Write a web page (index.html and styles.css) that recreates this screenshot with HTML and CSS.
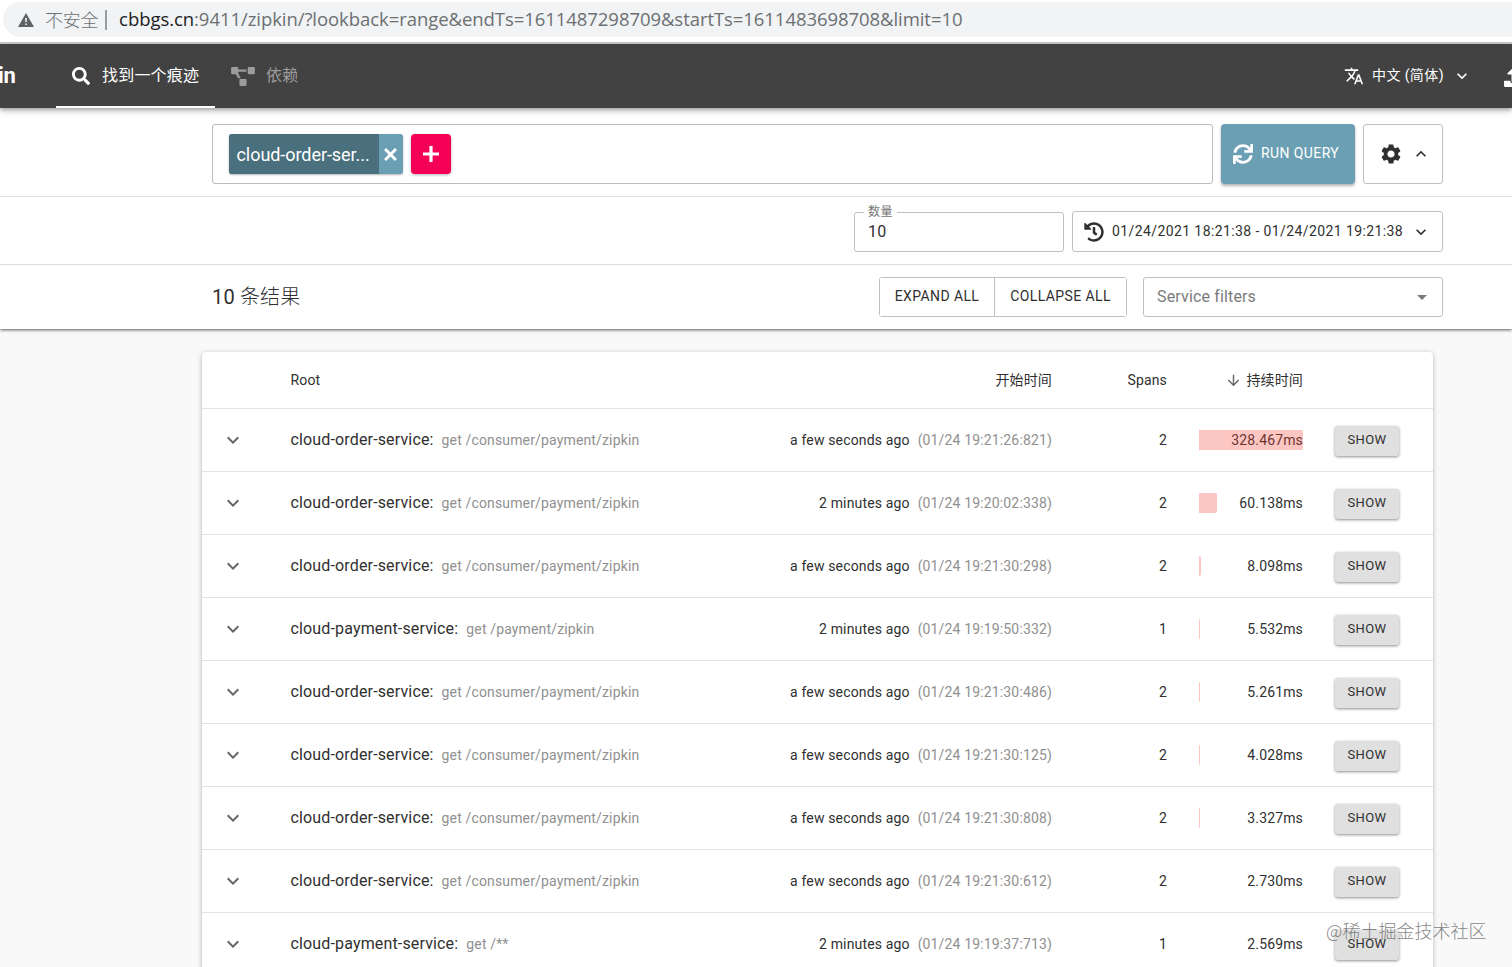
FILE: index.html
```html
<!DOCTYPE html>
<html lang="zh-CN">
<head>
<meta charset="utf-8">
<title>Zipkin</title>
<link rel="stylesheet" href="styles.css">
</head>
<body>
<svg class="defs" width="0" height="0">
  <symbol id="down" viewBox="0 0 24 24"><path d="M16.59 8.59L12 13.17 7.41 8.59 6 10l6 6 6-6z"/></symbol>
</svg>

<div class="address">
  <div class="pill">
    <svg class="warn" viewBox="0 0 16 14"><path d="M8 0L16 14H0z"/><path class="mark" d="M7.2 5h1.6v4H7.2zM7.2 10.4h1.6V12H7.2z"/></svg>
    <span class="insecure">不安全</span>
    <span class="sep"></span>
    <span class="url"><b>cbbgs.cn</b>:9411/zipkin/?lookback=range&amp;endTs=1611487298709&amp;startTs=1611483698708&amp;limit=10</span>
  </div>
</div>

<header class="appbar">
  <div class="brand">in</div>
  <nav class="tabs">
    <a class="tab active"><svg class="i-search" viewBox="0 0 512 512"><path d="M505 442.7L405.3 343c-4.5-4.5-10.6-7-17-7H372c27.6-35.3 44-79.7 44-128C416 93.1 322.9 0 208 0S0 93.1 0 208s93.1 208 208 208c48.3 0 92.7-16.4 128-44v16.3c0 6.4 2.5 12.5 7 17l99.7 99.7c9.4 9.4 24.6 9.4 33.9 0l28.3-28.3c9.4-9.4 9.4-24.6.1-34zM208 336c-70.7 0-128-57.2-128-128 0-70.7 57.2-128 128-128 70.7 0 128 57.2 128 128 0 70.7-57.2 128-128 128z"/></svg><span>找到一个痕迹</span></a>
    <a class="tab"><svg class="i-diagram" viewBox="0 0 640 512"><path d="M384 320H256c-17.67 0-32 14.33-32 32v128c0 17.67 14.33 32 32 32h128c17.67 0 32-14.33 32-32V352c0-17.67-14.33-32-32-32zM192 32c0-17.67-14.33-32-32-32H32C14.33 0 0 14.33 0 32v128c0 17.67 14.33 32 32 32h95.72l73.16 128.04C211.98 300.98 232.4 288 256 288h.28L192 175.51V128h224V64H192V32zM608 0H480c-17.67 0-32 14.33-32 32v128c0 17.67 14.33 32 32 32h128c17.67 0 32-14.33 32-32V32c0-17.67-14.33-32-32-32z"/></svg><span>依赖</span></a>
  </nav>
  <div class="lang">
    <svg class="i-translate" viewBox="0 0 24 24"><path d="M12.87 15.07l-2.54-2.51.03-.03c1.74-1.94 2.98-4.17 3.71-6.53H17V4h-7V2H8v2H1v1.99h11.17C11.5 7.92 10.44 9.75 9 11.35 8.07 10.32 7.3 9.19 6.69 8h-2c.73 1.63 1.73 3.17 2.98 4.56l-5.09 5.02L4 19l5-5 3.11 3.11.76-2.04zM18.5 10h-2L12 22h2l1.12-3h4.75L21 22h2l-4.5-12zm-2.62 7l1.62-4.33L19.12 17h-3.24z"/></svg>
    <span>中文 (简体)</span>
    <svg class="i-20" viewBox="0 0 24 24"><use href="#down"/></svg>
  </div>
  <svg class="i-upload" viewBox="0 0 512 512"><path d="M296 384h-80c-13.3 0-24-10.7-24-24V192h-87.7c-17.8 0-26.7-21.5-14.1-34.1L242.3 5.7c7.5-7.5 19.8-7.5 27.3 0l152.2 152.2c12.6 12.6 3.7 34.1-14.1 34.1H320v168c0 13.3-10.7 24-24 24zm216-8v112c0 13.3-10.7 24-24 24H24c-13.3 0-24-10.7-24-24V376c0-13.3 10.7-24 24-24h136v8c0 30.9 25.1 56 56 56h80c30.9 0 56-25.1 56-56v-8h136c13.3 0 24 10.7 24 24z"/></svg>
</header>

<section class="panel">
  <div class="bar query">
    <div class="criteria">
      <div class="chip"><span class="chip-text">cloud-order-ser...</span><span class="chip-x"><svg viewBox="0 0 12 12"><path d="M1 1l10 10M11 1l-10 10"/></svg></span></div>
      <div class="add"><svg viewBox="0 0 16 16"><path d="M8 0v16M0 8h16"/></svg></div>
    </div>
    <button class="run"><svg viewBox="0 0 512 512"><path d="M440.65 12.57l4 82.77A247.16 247.16 0 0 0 255.83 8C134.73 8 33.91 94.92 12.29 209.82A12 12 0 0 0 24.09 224h49.05a12 12 0 0 0 11.67-9.26 175.91 175.91 0 0 1 317-56.94l-101.46-4.86a12 12 0 0 0-12.57 12v47.41a12 12 0 0 0 12 12H500a12 12 0 0 0 12-12V12a12 12 0 0 0-12-12h-47.37a12 12 0 0 0-11.98 12.57zM255.83 432a175.61 175.61 0 0 1-146-77.8l101.8 4.87a12 12 0 0 0 12.57-12v-47.4a12 12 0 0 0-12-12H12a12 12 0 0 0-12 12V500a12 12 0 0 0 12 12h47.35a12 12 0 0 0 12-12.6l-4.15-82.57A247.17 247.17 0 0 0 255.83 504c121.11 0 221.93-86.92 243.55-201.82a12 12 0 0 0-11.8-14.18h-49.05a12 12 0 0 0-11.67 9.26A175.86 175.86 0 0 1 255.83 432z"/></svg><span>RUN QUERY</span></button>
    <button class="outlined settings"><svg class="i-cog" viewBox="0 0 24 24"><path d="M19.14,12.94c0.04-0.3,0.06-0.61,0.06-0.94c0-0.32-0.02-0.64-0.07-0.94l2.03-1.58c0.18-0.14,0.23-0.41,0.12-0.61 l-1.92-3.32c-0.12-0.22-0.37-0.29-0.59-0.22l-2.39,0.96c-0.5-0.38-1.03-0.7-1.62-0.94L14.4,2.81c-0.04-0.24-0.24-0.41-0.48-0.41 h-3.84c-0.24,0-0.43,0.17-0.47,0.41L9.25,5.35C8.66,5.59,8.12,5.92,7.63,6.29L5.24,5.33c-0.22-0.08-0.47,0-0.59,0.22L2.74,8.87 C2.62,9.08,2.66,9.34,2.86,9.48l2.03,1.58C4.84,11.36,4.8,11.69,4.8,12s0.02,0.64,0.07,0.94l-2.03,1.58 c-0.18,0.14-0.23,0.41-0.12,0.61l1.92,3.32c0.12,0.22,0.37,0.29,0.59,0.22l2.39-0.96c0.5,0.38,1.03,0.7,1.62,0.94l0.36,2.54 c0.05,0.24,0.24,0.41,0.48,0.41h3.84c0.24,0,0.44-0.17,0.47-0.41l0.36-2.54c0.59-0.24,1.13-0.56,1.62-0.94l2.39,0.96 c0.22,0.08,0.47,0,0.59-0.22l1.92-3.32c0.12-0.22,0.07-0.47-0.12-0.61L19.14,12.94z M12,15.6c-1.98,0-3.6-1.62-3.6-3.6 s1.62-3.6,3.6-3.6s3.6,1.62,3.6,3.6S13.98,15.6,12,15.6z"/></svg><svg class="i-20 up" viewBox="0 0 24 24"><use href="#down"/></svg></button>
  </div>
  <div class="bar options">
    <fieldset class="limit"><legend>数量</legend><span>10</span></fieldset>
    <button class="outlined range"><svg class="i-history" viewBox="0 0 512 512"><path d="M504 255.531c.253 136.64-111.18 248.372-247.82 248.468-59.015.042-113.223-20.53-155.822-54.911-11.077-8.94-11.905-25.541-1.839-35.607l11.267-11.267c8.609-8.609 22.353-9.551 31.891-1.984C173.062 425.135 212.781 440 256 440c101.705 0 184-82.311 184-184 0-101.705-82.311-184-184-184-48.814 0-93.149 18.969-126.068 49.932l50.754 50.754c10.08 10.08 2.941 27.314-11.313 27.314H24c-8.837 0-16-7.163-16-16V38.627c0-14.254 17.234-21.393 27.314-11.314l49.372 49.372C129.209 34.136 189.552 8 256 8c136.81 0 247.747 110.78 248 247.531zm-180.912 78.784l9.823-12.63c8.138-10.463 6.253-25.542-4.21-33.679L288 256.349V152c0-13.255-10.745-24-24-24h-16c-13.255 0-24 10.745-24 24v135.651l65.409 50.874c10.463 8.137 25.541 6.253 33.679-4.21z"/></svg><span>01/24/2021 18:21:38 - 01/24/2021 19:21:38</span><svg class="i-20" viewBox="0 0 24 24"><use href="#down"/></svg></button>
  </div>
  <div class="bar summary">
    <h1>10 <span>条结果</span></h1>
    <div class="group"><button class="b1">EXPAND ALL</button><button class="b2">COLLAPSE ALL</button></div>
    <div class="outlined filter"><span>Service filters</span><svg viewBox="0 0 24 24"><path d="M7 10l5 5 5-5z"/></svg></div>
  </div>
</section>

<main class="card">
  <div class="row head"><span></span><span class="h-root">Root</span><span class="num">开始时间</span><span class="num">Spans</span><span class="dur-h"><svg viewBox="0 0 24 24"><path d="M20 12l-1.41-1.41L13 16.17V4h-2v12.17l-5.58-5.59L4 12l8 8 8-8z"/></svg>持续时间</span></div>
  <div class="row"><svg class="exp"><use href="#down"/></svg><div class="root"><b>cloud-order-service:</b><i>get /consumer/payment/zipkin</i></div><div class="time"><b>a few seconds ago</b><i>(01/24 19:21:26:821)</i></div><span class="num">2</span><div class="dur"><em>328.467ms</em><s style="width:100%"></s></div><button class="show">SHOW</button></div>
  <div class="row"><svg class="exp"><use href="#down"/></svg><div class="root"><b>cloud-order-service:</b><i>get /consumer/payment/zipkin</i></div><div class="time"><b>2 minutes ago</b><i>(01/24 19:20:02:338)</i></div><span class="num">2</span><div class="dur"><em>60.138ms</em><s style="width:17.6%"></s></div><button class="show">SHOW</button></div>
  <div class="row"><svg class="exp"><use href="#down"/></svg><div class="root"><b>cloud-order-service:</b><i>get /consumer/payment/zipkin</i></div><div class="time"><b>a few seconds ago</b><i>(01/24 19:21:30:298)</i></div><span class="num">2</span><div class="dur"><em>8.098ms</em><s style="width:2.2%"></s></div><button class="show">SHOW</button></div>
  <div class="row"><svg class="exp"><use href="#down"/></svg><div class="root"><b>cloud-payment-service:</b><i>get /payment/zipkin</i></div><div class="time"><b>2 minutes ago</b><i>(01/24 19:19:50:332)</i></div><span class="num">1</span><div class="dur"><em>5.532ms</em><s style="width:1%"></s></div><button class="show">SHOW</button></div>
  <div class="row"><svg class="exp"><use href="#down"/></svg><div class="root"><b>cloud-order-service:</b><i>get /consumer/payment/zipkin</i></div><div class="time"><b>a few seconds ago</b><i>(01/24 19:21:30:486)</i></div><span class="num">2</span><div class="dur"><em>5.261ms</em><s style="width:1%"></s></div><button class="show">SHOW</button></div>
  <div class="row"><svg class="exp"><use href="#down"/></svg><div class="root"><b>cloud-order-service:</b><i>get /consumer/payment/zipkin</i></div><div class="time"><b>a few seconds ago</b><i>(01/24 19:21:30:125)</i></div><span class="num">2</span><div class="dur"><em>4.028ms</em><s style="width:1%"></s></div><button class="show">SHOW</button></div>
  <div class="row"><svg class="exp"><use href="#down"/></svg><div class="root"><b>cloud-order-service:</b><i>get /consumer/payment/zipkin</i></div><div class="time"><b>a few seconds ago</b><i>(01/24 19:21:30:808)</i></div><span class="num">2</span><div class="dur"><em>3.327ms</em><s style="width:1%"></s></div><button class="show">SHOW</button></div>
  <div class="row"><svg class="exp"><use href="#down"/></svg><div class="root"><b>cloud-order-service:</b><i>get /consumer/payment/zipkin</i></div><div class="time"><b>a few seconds ago</b><i>(01/24 19:21:30:612)</i></div><span class="num">2</span><div class="dur"><em>2.730ms</em><s style="width:0"></s></div><button class="show">SHOW</button></div>
  <div class="row"><svg class="exp"><use href="#down"/></svg><div class="root"><b>cloud-payment-service:</b><i>get /**</i></div><div class="time"><b>2 minutes ago</b><i>(01/24 19:19:37:713)</i></div><span class="num">1</span><div class="dur"><em>2.569ms</em><s style="width:0"></s></div><button class="show">SHOW</button></div>
</main>
<div class="watermark">@稀土掘金技术社区</div>
</body>
</html>
```
FILE: styles.css
```css
* { box-sizing: border-box; }
html, body { height: 967px; overflow: hidden; }
body { margin: 0; position: relative; background: #f9f9f9; color: #303030; font: 14px/20px Roboto, "Noto Sans CJK SC", sans-serif; letter-spacing: .15px; }
svg { flex: none; fill: currentColor; }
b, i, em, s { font-weight: 400; font-style: normal; text-decoration: none; }
button { font: inherit; letter-spacing: inherit; color: inherit; padding: 0; margin: 0; border: 0; background: #fff; white-space: nowrap; }
.defs { position: absolute; }
.i-20 { width: 20px; height: 20px; }

.address { height: 44px; padding-top: 2px; background: #fff; border-bottom: 2px solid #c9c9c9; }
.pill { display: flex; align-items: center; height: 35px; margin-left: 3px; padding-left: 15px; background: #f1f3f4; border-radius: 18px 0 0 18px; color: #6c7073; white-space: nowrap; }
.warn { width: 16px; height: 14px; fill: #5f6368; }
.warn .mark { fill: #f1f3f4; }
.insecure { margin: -2px 0 0 11px; font: 300 18px/30px "Noto Sans CJK SC", sans-serif; letter-spacing: -.3px; }
.sep { width: 2px; height: 20px; margin: 0 12px 0 7px; background: #9a9da0; }
.url { margin-top: -2px; font: 18.5px/30px "Open Sans", sans-serif; letter-spacing: -.06px; }
.url b { color: #202124; }

.appbar { position: relative; z-index: 2; display: flex; height: 64px; background: #424242; color: #fff; box-shadow: 0 2px 4px rgba(0,0,0,.3), 0 4px 8px rgba(0,0,0,.1); }
.brand { width: 58px; margin-left: -2px; line-height: 63px; font-size: 22px; font-weight: 700; letter-spacing: -.3px; }
.tabs { display: flex; flex: 1; }
.tab { display: flex; align-items: center; height: 64px; padding: 0 16px; font-size: 16px; letter-spacing: .2px; color: #9c9c9c; white-space: nowrap; }
.tab.active { width: 159px; color: #fff; border-bottom: 2px solid #fff; padding-top: 2px; }
.i-search { width: 18px; height: 18px; margin-right: 12px; }
.i-diagram { width: 24px; height: 19px; margin-right: 11px; }
.lang { display: flex; align-items: center; width: 160px; font-size: 14px; letter-spacing: .4px; }
.lang span { margin-top: -2px; }
.i-translate { width: 20px; height: 20px; margin-right: 8px; }
.lang .i-20 { margin-left: 8px; }
.i-upload { width: 20px; height: 20px; margin: 23px -12px 0 0; }

.panel { background: #fff; box-shadow: 0 1px 3px rgba(0,0,0,.65); }
.bar { display: flex; padding: 0 69px 0 212px; }
.outlined { display: flex; align-items: center; border: 1px solid #c0c0c0; border-radius: 3px; }
.query { height: 89px; padding-top: 16px; gap: 8px; border-bottom: 1px solid #dedede; }
.criteria { flex: 1; height: 60px; display: flex; gap: 8px; padding: 9px 16px; border: 1px solid #bcbcbc; border-radius: 3px; }
.chip { display: flex; width: 174px; height: 40px; margin-left: -.5px; border-radius: 3px; overflow: hidden; background: #6b9fb3; color: #fff; box-shadow: 0 1px 2px rgba(0,0,0,.3); }
.chip-text { width: 150px; padding-left: 8px; background: #4a6f7d; font-size: 18px; line-height: 41px; letter-spacing: -.06px; }
.chip-x { flex: 1; display: grid; place-items: center; }
.chip-x svg { width: 13px; height: 13px; stroke: #fff; stroke-width: 2.7; }
.add { width: 40px; height: 40px; display: grid; place-items: center; background: #f50057; border-radius: 4px; box-shadow: 0 1px 3px rgba(0,0,0,.3); }
.add svg { width: 16px; height: 16px; stroke: #fff; stroke-width: 3.2; }
.run { display: flex; align-items: center; width: 134px; height: 60px; padding-left: 12px; gap: 8px; border-radius: 4px; background: #6b9fb3; color: #fff; letter-spacing: .4px; box-shadow: 0 2px 3px rgba(0,0,0,.3); }
.run svg { width: 20px; height: 20px; }
.run span { margin-top: -2px; }
.settings { width: 80px; height: 60px; padding-left: 15px; gap: 8px; }
.i-cog { width: 24px; height: 24px; }
.up { transform: rotate(180deg); }
.options { height: 68px; padding-top: 14px; gap: 8px; justify-content: flex-end; border-bottom: 1px solid #dedede; }
.limit { width: 210px; height: 48px; margin: -7px 0 0; padding: 0 13px; min-width: 0; border: 1px solid #c0c0c0; border-radius: 3px; line-height: 24px; font-size: 16px; }
.limit legend { padding: 0 4px; margin-left: -4px; color: #757575; font-size: 12px; line-height: 16px; letter-spacing: .5px; }
.range { width: 371px; height: 41px; padding-left: 11px; letter-spacing: .4px; }
.range span { margin-top: -2px; }
.i-history { width: 20px; height: 20px; margin-right: 8px; }
.range .i-20 { margin-left: 8px; }
.summary { height: 64px; padding-top: 12px; }
h1 { flex: 1; margin: 0; font-size: 20px; line-height: 40px; font-weight: 400; letter-spacing: .15px; }
h1 span { font-weight: 300; }
.group { display: flex; width: 248px; height: 40px; border: 1px solid #c0c0c0; border-radius: 3px; letter-spacing: .4px; }
.group button { padding-bottom: 2px; }
.b1 { width: 115px; border-right: 1px solid #c0c0c0; }
.b2 { flex: 1; }
.filter { width: 300px; height: 40px; margin-left: 16px; padding: 0 8px 0 13px; justify-content: space-between; color: #7b7b7b; font-size: 16px; }
.filter span { margin-top: -1px; }
.filter svg { width: 24px; height: 24px; }

.card { width: 1231px; margin: 23px 0 0 202px; background: #fff; border-radius: 4px; box-shadow: 0 1px 5px rgba(0,0,0,.28); }
.row { display: grid; grid-template-columns: 88.5px 350px 411.5px 115px 104px 64px; align-items: center; height: 63px; border-bottom: 1px solid #e2e2e2; white-space: nowrap; }
.row > .dur, .row > .dur-h { margin-left: 32px; width: 104px; }
.row > .show { margin: 1px 0 0 64px; }
.head { height: 57px; }
.num { text-align: right; }
.dur-h { display: flex; justify-content: flex-end; align-items: center; gap: 4px; }
.dur-h svg { width: 17px; height: 17px; color: #666; }
.exp { width: 24px; height: 24px; margin-left: 19px; color: #666; }
.root, .time { display: flex; gap: 8px; }
.root b { font-size: 16px; }
.root i, .time i { color: #909090; }
.time { justify-content: flex-end; }
.dur { position: relative; height: 20px; text-align: right; }
.dur s { position: absolute; left: 0; top: 0; height: 20px; background: rgba(244,67,54,.3); border-radius: 0 2px 2px 0; }
.show { width: 64px; height: 30px; padding-bottom: 1px; background: #e0e0e0; border-radius: 3px; font-size: 13px; letter-spacing: .4px; box-shadow: 0 1px 3px rgba(0,0,0,.45); }
.watermark { position: absolute; z-index: 3; left: 1326px; top: 917px; color: rgba(110,110,110,.85); font: 300 18px/26px "Noto Sans CJK SC", sans-serif; letter-spacing: 0; white-space: nowrap; }
```
